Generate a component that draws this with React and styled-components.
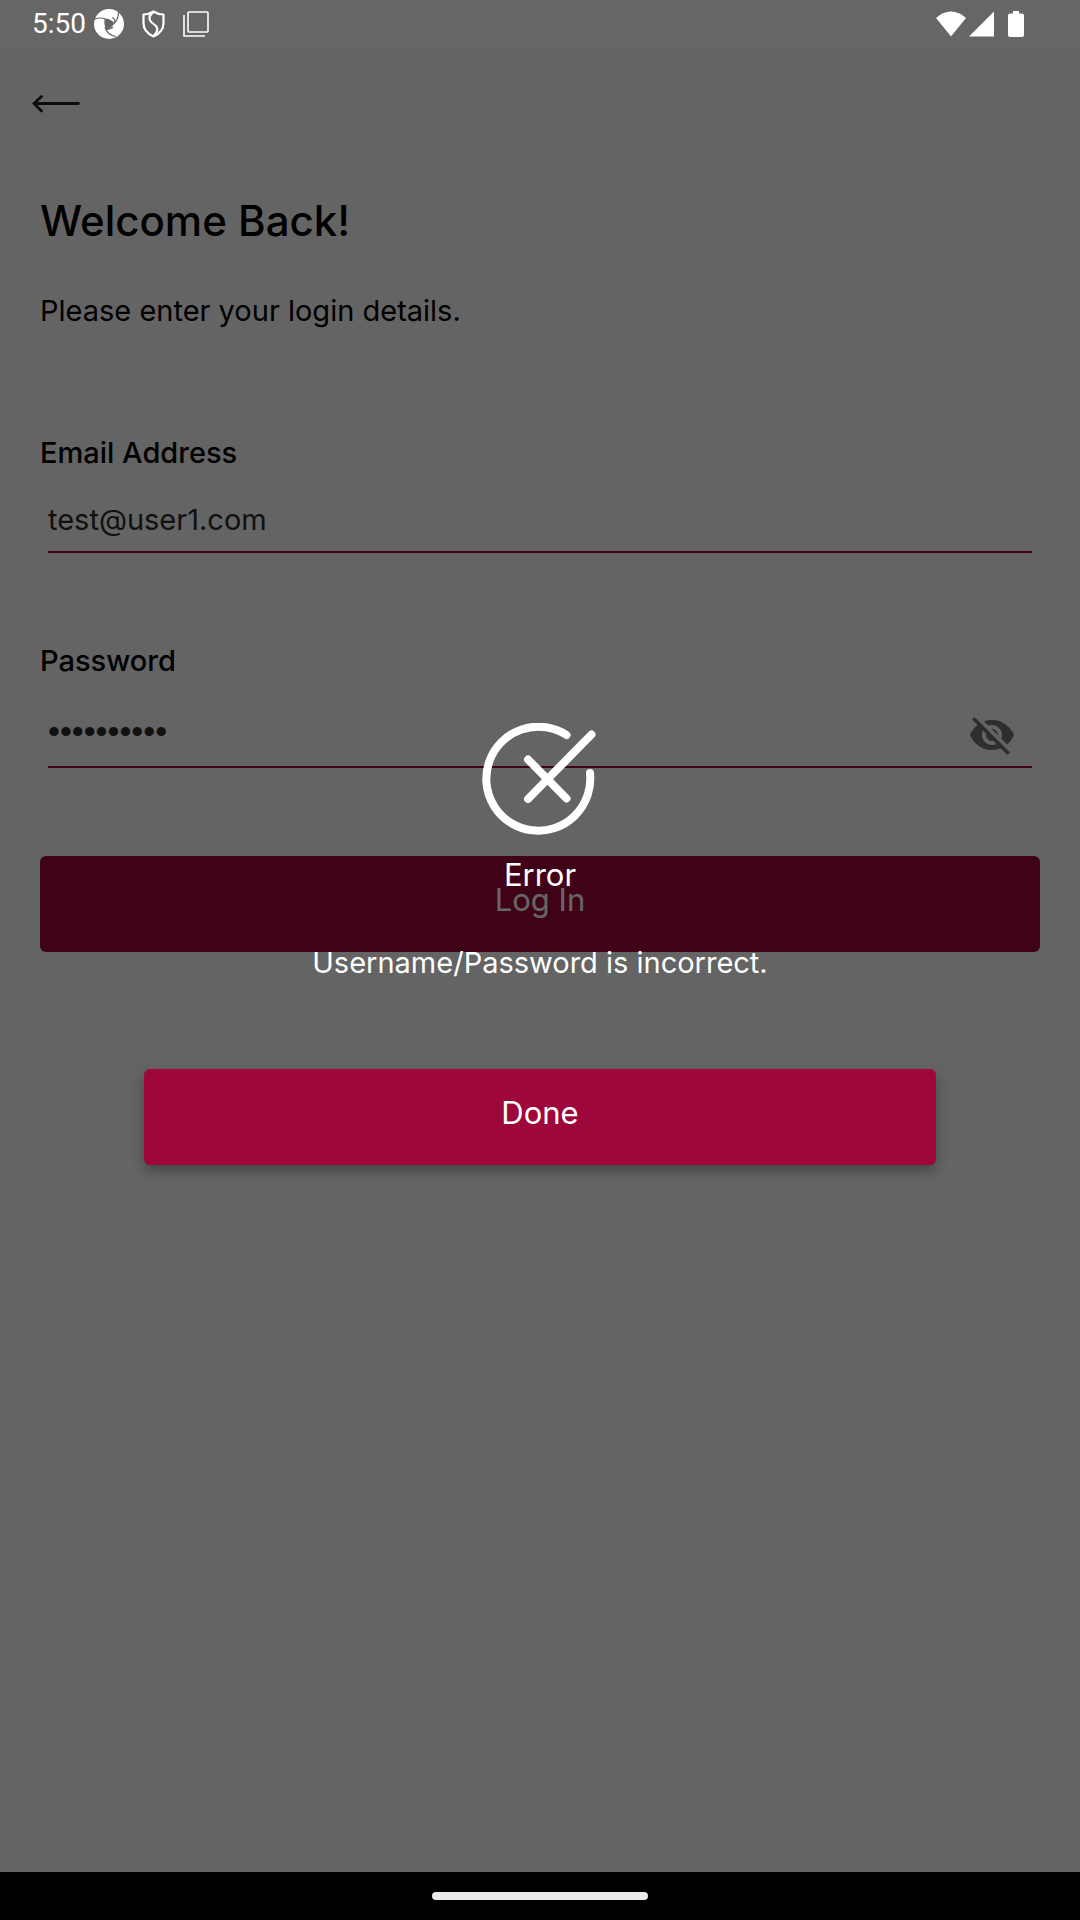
import React, { useState } from 'react';
import styled, { createGlobalStyle } from 'styled-components';
import { MdVisibilityOff } from 'react-icons/md';

const crimson = '#9e073b';

const GlobalStyle = createGlobalStyle`
  *, *::before, *::after { box-sizing: border-box; }
  body { margin: 0; font-family: Inter, "Noto Sans", sans-serif; }
  button, input { font: inherit; }
`;

const Screen = styled.div`
  display: flex;
  flex-direction: column;
  min-height: 100vh;
  background: #fafafa;
`;

const StatusBar = styled.header`
  display: flex;
  align-items: center;
  justify-content: space-between;
  height: 48px;
  padding: 0 56px 0 32px;
  background: #666666;
  color: #ffffff;
  font: 400 28px/48px Roboto, sans-serif;
`;

const StatusGroup = styled.div`
  display: flex;
  align-items: center;
  gap: ${({ $gap }) => $gap}px;
`;

const Notifications = styled(StatusGroup)`
  margin-left: 8px;
`;

const Main = styled.main`
  position: relative;
  flex: 1;
  padding: 32px 40px;
  color: #000000;
`;

const BackButton = styled.button`
  display: flex;
  align-items: center;
  height: 48px;
  margin-left: -8px;
  padding: 0;
  border: 0;
  background: none;
  color: inherit;
`;

const Title = styled.h1`
  margin: 61px 0 0;
  font-size: 42px;
  font-weight: 500;
  line-height: 64px;
`;

const Intro = styled.p`
  margin: 36px 0 0;
  font-size: 29px;
  line-height: 44px;
`;

const Form = styled.form`
  display: flex;
  flex-direction: column;
  margin-top: 100px;
`;

const Label = styled.label`
  font-size: 29px;
  font-weight: 500;
  line-height: 40px;
`;

const Field = styled.div`
  display: flex;
  align-items: center;
  height: ${({ $height }) => $height}px;
  margin: 16px 8px 88px;
  border-bottom: 2px solid ${crimson};
`;

const PasswordField = styled(Field)`
  margin-top: 15px;
`;

const Input = styled.input`
  flex: 1;
  min-width: 0;
  padding: 0;
  border: 0;
  outline: 0;
  background: none;
  color: #2b2b2b;
  font-size: 29px;
  line-height: 40px;
`;

const PasswordInput = styled(Input)`
  font-family: "Liberation Sans", sans-serif;
  font-size: 34px;
`;

const EyeButton = styled.button`
  display: flex;
  margin-right: 16px;
  padding: 8px 0 0;
  border: 0;
  background: none;
  color: #737373;
`;

const Button = styled.button`
  height: 96px;
  padding: 0 24px 8px;
  border: 0;
  border-radius: 6px;
  background: ${crimson};
  color: #ffffff;
  font-size: 31px;
  line-height: 40px;
`;

const Overlay = styled.div`
  position: absolute;
  inset: 0;
  display: flex;
  align-items: center;
  justify-content: center;
  padding-bottom: 32px;
  background: rgba(0, 0, 0, 0.6);
`;

const Dialog = styled.section`
  display: flex;
  flex-direction: column;
  align-items: center;
  width: 100%;
  padding: 0 144px;
  color: #ffffff;
`;

const DialogTitle = styled.h2`
  margin: 20px 0 0;
  font-size: 31px;
  font-weight: 400;
  line-height: 40px;
`;

const DialogText = styled.p`
  margin: 48px 0 86px;
  font-size: 29px;
  line-height: 40px;
`;

const DoneButton = styled(Button)`
  align-self: stretch;
  box-shadow: 0 6px 12px rgba(0, 0, 0, 0.3);
`;

const NavBar = styled.footer`
  display: flex;
  align-items: center;
  justify-content: center;
  height: 48px;
  background: #000000;
`;

const NavHandle = styled.div`
  width: 20%;
  height: 8px;
  border-radius: 4px;
  background: #ececec;
`;

const SwirlIcon = () => (
  <svg width="30" height="30" viewBox="0 0 30 30" fill="none">
    <circle cx="15" cy="15" r="15" fill="#fff" />
    <path d="M10.500 9.500Q17 9.500 20.500 14.500Q17 19.500 12 20.500Q9.500 15 10.500 9.500Z" fill="#666" />
    <path d="M0 10.500Q5 8 11 9.700M20.200 14.500Q24.500 10 24.500 3M18 8.500Q22 10 20.200 14.500M11 18Q13 26 22 27.500M12 20.500Q17 20 19 18" stroke="#666" strokeWidth="1.200" />
  </svg>
);

const ShieldIcon = () => (
  <svg width="23" height="28" viewBox="0 0 23 28" fill="none" stroke="#fff" strokeWidth="2.200" strokeLinejoin="round">
    <path d="M11.500 1.500Q7 4.500 1.500 4.500V13Q1.500 22 11.500 26.500Q21.500 22 21.500 13V4.500Q16 4.500 11.500 1.500Z" />
    <path d="M11.500 2Q6 6 8 10.500Q9 12 14 16Q17.500 20 11.500 26" />
  </svg>
);

const StackIcon = () => (
  <svg width="26" height="26" viewBox="0 0 26 26" fill="none" stroke="#fff" strokeWidth="1.6">
    <rect x="5" y="1" width="20" height="20" rx="1" />
    <path d="M1 4V25H22" />
  </svg>
);

const WifiIcon = () => (
  <svg width="30" height="26" viewBox="0 0 30 26">
    <path d="M0 7Q7 0.500 15 0.500T30 7L15 25.500Z" fill="#fff" />
  </svg>
);

const SignalIcon = () => (
  <svg width="25" height="26" viewBox="0 0 25 26">
    <path d="M0 25.500L25 0.500V25.500Z" fill="#fff" />
  </svg>
);

const BatteryIcon = () => (
  <svg width="16" height="26" viewBox="0 0 16 26">
    <path d="M5 0H11V2.500H14Q16 2.500 16 4.500V24Q16 26 14 26H2Q0 26 0 24V4.500Q0 2.500 2 2.500H5Z" fill="#fff" />
  </svg>
);

const BackArrow = () => (
  <svg width="48" height="18" viewBox="0 0 48 18" fill="none" stroke="#222" strokeWidth="2.800" strokeLinecap="round">
    <path d="M46.500 8.500H2M9.500 1.500L2 8.500L9.500 16" />
  </svg>
);

const ErrorIcon = () => (
  <svg width="116" height="112" viewBox="0 0 116 112" fill="none" stroke="#fff" strokeWidth="8" strokeLinecap="round">
    <path d="M84.500 12A52 52 0 1 0 108 50" />
    <path d="M46 76L109.500 11.500M46 36.500L84.500 75.500" />
  </svg>
);

export default function App() {
  const [email, setEmail] = useState('test@user1.com');
  const [password, setPassword] = useState('password12');

  return (
    <>
      <GlobalStyle />
      <Screen>
        <StatusBar>
          <StatusGroup $gap={0}>
            <span>5:50</span>
            <Notifications $gap={18}>
              <SwirlIcon />
              <ShieldIcon />
              <StackIcon />
            </Notifications>
          </StatusGroup>
          <StatusGroup $gap={14}>
            <StatusGroup $gap={3}>
              <WifiIcon />
              <SignalIcon />
            </StatusGroup>
            <BatteryIcon />
          </StatusGroup>
        </StatusBar>
        <Main>
          <BackButton type="button" aria-label="Back">
            <BackArrow />
          </BackButton>
          <Title>Welcome Back!</Title>
          <Intro>Please enter your login details.</Intro>
          <Form onSubmit={(e) => e.preventDefault()}>
            <Label htmlFor="email">Email Address</Label>
            <Field $height={64}>
              <Input id="email" type="email" value={email} onChange={(e) => setEmail(e.target.value)} />
            </Field>
            <Label htmlFor="password">Password</Label>
            <PasswordField $height={72}>
              <PasswordInput
                id="password"
                type="password"
                value={password}
                onChange={(e) => setPassword(e.target.value)}
              />
              <EyeButton type="button" aria-label="Show password">
                <MdVisibilityOff size={48} />
              </EyeButton>
            </PasswordField>
            <Button type="submit">Log In</Button>
          </Form>
          <Overlay>
            <Dialog role="alertdialog" aria-labelledby="error-title" aria-describedby="error-text">
              <ErrorIcon />
              <DialogTitle id="error-title">Error</DialogTitle>
              <DialogText id="error-text">Username/Password is incorrect.</DialogText>
              <DoneButton type="button">Done</DoneButton>
            </Dialog>
          </Overlay>
        </Main>
        <NavBar>
          <NavHandle />
        </NavBar>
      </Screen>
    </>
  );
}
